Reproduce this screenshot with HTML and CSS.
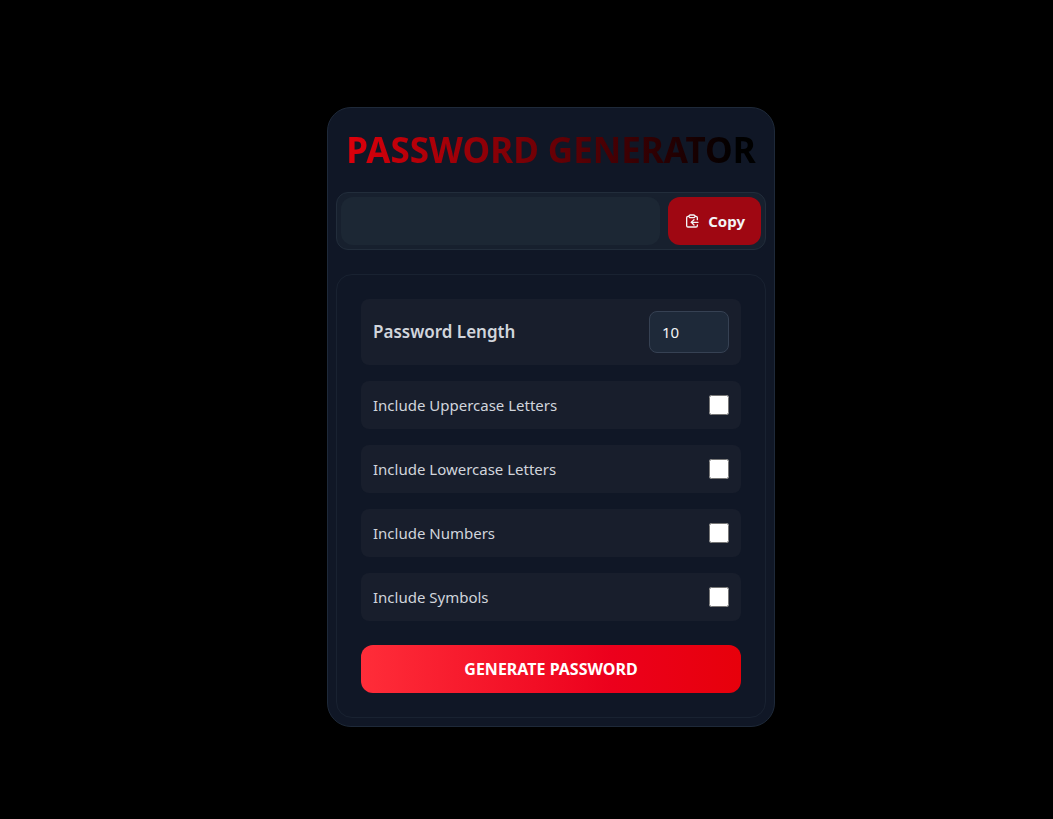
FILE: index.html
```html
<!DOCTYPE html>
<html lang="en">
<head>
<meta charset="utf-8">
<meta name="viewport" content="width=device-width, initial-scale=1">
<title>Password Generator</title>
<link rel="stylesheet" href="styles.css">
</head>
<body>
<main class="page">
  <section class="card">
    <h1 class="title">PASSWORD GENERATOR</h1>
    <div class="output">
      <input class="output-field" type="text" aria-label="Generated password" readonly>
      <button class="copy" type="button">
        <svg class="copy-icon" viewBox="0 0 24 24" fill="none" stroke="currentColor" stroke-width="2" stroke-linecap="round" stroke-linejoin="round" aria-hidden="true">
          <path d="M9 3h6l2 2-2 2H9L7 5z"/>
          <path d="M7 5H6a2 2 0 0 0-2 2v12a2 2 0 0 0 2 2h12a2 2 0 0 0 2-2v-1"/>
          <path d="M17 5h1a2 2 0 0 1 2 2v3"/>
          <path d="M21 14H11"/>
          <path d="m15 10-4 4 4 4"/>
        </svg>
        Copy
      </button>
    </div>
    <form class="options">
      <div class="row row-length">
        <label for="length">Password Length</label>
        <input class="length" id="length" type="number" value="10">
      </div>
      <div class="row">
        <label for="upper">Include Uppercase Letters</label>
        <input class="check" id="upper" type="checkbox">
      </div>
      <div class="row">
        <label for="lower">Include Lowercase Letters</label>
        <input class="check" id="lower" type="checkbox">
      </div>
      <div class="row">
        <label for="numbers">Include Numbers</label>
        <input class="check" id="numbers" type="checkbox">
      </div>
      <div class="row">
        <label for="symbols">Include Symbols</label>
        <input class="check" id="symbols" type="checkbox">
      </div>
      <button class="generate" type="button">GENERATE PASSWORD</button>
    </form>
  </section>
</main>
</body>
</html>
```
FILE: styles.css
```css
* {
  box-sizing: border-box;
}

body {
  margin: 0;
  background: #000;
  color: #d1d5dc;
  font-family: "Segoe UI", "Noto Sans", sans-serif;
  font-size: 15px;
  line-height: 24px;
}

input,
button {
  font: inherit;
}

.page {
  display: flex;
  align-items: center;
  justify-content: center;
  min-height: 100vh;
  padding: 15px 0 0 49px;
}

.card {
  width: 100%;
  max-width: 448px;
  padding: 8px;
  border: 1px solid #1e2939;
  border-radius: 24px;
  background: #101726;
}

.title {
  width: fit-content;
  margin: 14px auto 22px;
  background: linear-gradient(to right, #de000b, #000 95%);
  background-clip: text;
  color: transparent;
  font-size: 35px;
  font-weight: 700;
  line-height: 40px;
  white-space: nowrap;
}

.output {
  display: flex;
  gap: 8px;
  margin-bottom: 24px;
  padding: 4px;
  border: 1px solid #222d3b;
  border-radius: 12px;
  background: #17202e;
}

.output-field {
  flex: 1;
  min-width: 0;
  height: 48px;
  padding: 0 16px;
  border: 0;
  border-radius: 12px;
  background: #1c2734;
  color: #fff;
}

.copy {
  display: flex;
  align-items: center;
  gap: 8px;
  padding: 0 16px;
  border: 0;
  border-radius: 12px;
  background: #9f0712;
  color: #f3f4f6;
  font-size: 15px;
  font-weight: 700;
}

.copy-icon {
  width: 16px;
  height: 16px;
}

.options {
  display: flex;
  flex-direction: column;
  gap: 16px;
  padding: 24px;
  border: 1px solid #192231;
  border-radius: 16px;
}

.row {
  display: flex;
  align-items: center;
  justify-content: space-between;
  padding: 12px;
  border-radius: 8px;
  background: #181e2c;
}

.row-length {
  font-size: 17px;
  font-weight: 600;
}

.length {
  width: 80px;
  height: 42px;
  padding: 0 12px;
  border: 1px solid #364153;
  border-radius: 8px;
  background: #1e2939;
  color: #f3f4f6;
  font-size: 15px;
  font-weight: 400;
}

.check {
  width: 20px;
  height: 20px;
  margin: 0;
}

.generate {
  height: 48px;
  margin-top: 8px;
  border: 0;
  border-radius: 12px;
  background: linear-gradient(to right, #ff2d39, #ec001c 66%, #e7000b);
  color: #fff;
  font-size: 16px;
  font-weight: 700;
}
```
